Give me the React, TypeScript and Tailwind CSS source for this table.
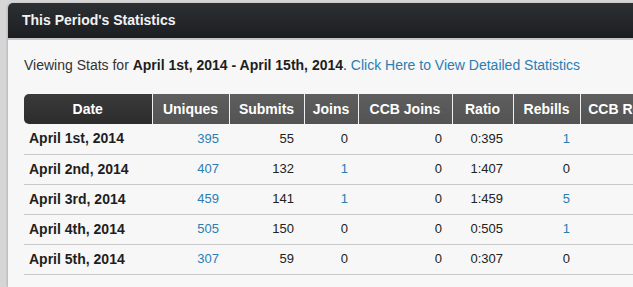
const columns = [
  { label: 'Date', w: 'w-[128px]' },
  { label: 'Uniques', w: 'w-[77px]' },
  { label: 'Submits', w: 'w-[75px]' },
  { label: 'Joins', w: 'w-[54px]' },
  { label: 'CCB Joins', w: 'w-[94px]' },
  { label: 'Ratio', w: 'w-[61px]' },
  { label: 'Rebills', w: 'w-[67px]' },
  { label: 'CCB Rebills', w: 'w-[96px]' },
];

type Row = {
  date: string;
  uniques: number;
  submits: number;
  joins: number;
  ccbJoins: number;
  ratio: string;
  rebills: number;
};

const rows: Row[] = [
  { date: 'April 1st, 2014', uniques: 395, submits: 55, joins: 0, ccbJoins: 0, ratio: '0:395', rebills: 1 },
  { date: 'April 2nd, 2014', uniques: 407, submits: 132, joins: 1, ccbJoins: 0, ratio: '1:407', rebills: 0 },
  { date: 'April 3rd, 2014', uniques: 459, submits: 141, joins: 1, ccbJoins: 0, ratio: '1:459', rebills: 5 },
  { date: 'April 4th, 2014', uniques: 505, submits: 150, joins: 0, ccbJoins: 0, ratio: '0:505', rebills: 1 },
  { date: 'April 5th, 2014', uniques: 307, submits: 59, joins: 0, ccbJoins: 0, ratio: '0:307', rebills: 0 },
];

// non-zero counts are links
function Num({ value, link }: { value: number; link?: boolean }) {
  if (link && value > 0) return <a className="text-[#2b7db3]">{value}</a>;
  return <span>{value}</span>;
}

const cell = 'h-[30px] border-b border-[#c9c9c9] pr-[10px] text-right';

export default function App() {
  return (
    <div
      className="h-[287px] w-[633px] overflow-hidden bg-[#d6d6d6] pl-2 pt-[3px]"
      style={{ fontFamily: '"Liberation Sans", Arial, sans-serif' }}
    >
      <div className="h-full w-[680px] overflow-hidden rounded-tl-[5px] bg-[#f7f7f7] shadow-[-1px_0_2px_rgba(0,0,0,0.15)]">
        <div className="flex h-[37px] items-center border-b-2 border-[#c4c8cc] bg-gradient-to-b from-[#2d3033] via-[#25282b] to-[#1b1d1f] pl-[14px]">
          <h2 className="text-[14px] font-bold text-[#f2f2f2]">This Period's Statistics</h2>
        </div>

        <div className="pl-4 pt-[15px]">
          <p className="text-[14px] leading-[20px] text-[#333]">
            Viewing Stats for <b className="text-[#1e1e1e]">April 1st, 2014 - April 15th, 2014</b>.{' '}
            <a className="text-[#2b7db3]">Click Here to View Detailed Statistics</a>
          </p>

          <table className="mt-[19px] w-[652px] table-fixed border-collapse text-[13px]">
            <thead>
              <tr>
                {columns.map((c, i) => (
                  <th
                    key={c.label}
                    className={
                      c.w +
                      ' h-[30px] whitespace-nowrap border-l border-[#f0f0f0] text-center text-[14px] font-bold text-white ' +
                      (i === 0
                        ? 'rounded-l-[5px] border-l-0 bg-gradient-to-b from-[#3a3a3a] to-[#2c2c2c]'
                        : 'bg-gradient-to-b from-[#5e5e5e] to-[#535353]')
                    }
                  >
                    {c.label}
                  </th>
                ))}
              </tr>
            </thead>
            <tbody className="text-[#222]">
              {rows.map((r) => (
                <tr key={r.date}>
                  <td className="h-[30px] border-b border-[#c9c9c9] pl-[5px] text-left text-[14px] font-bold text-[#1e1e1e]">
                    {r.date}
                  </td>
                  <td className={cell}>
                    <Num value={r.uniques} link />
                  </td>
                  <td className={cell}>{r.submits}</td>
                  <td className={cell}>
                    <Num value={r.joins} link />
                  </td>
                  <td className={cell}>{r.ccbJoins}</td>
                  <td className={cell}>{r.ratio}</td>
                  <td className={cell}>
                    <Num value={r.rebills} link />
                  </td>
                  <td className={cell}></td>
                </tr>
              ))}
            </tbody>
          </table>
        </div>
      </div>
    </div>
  );
}
